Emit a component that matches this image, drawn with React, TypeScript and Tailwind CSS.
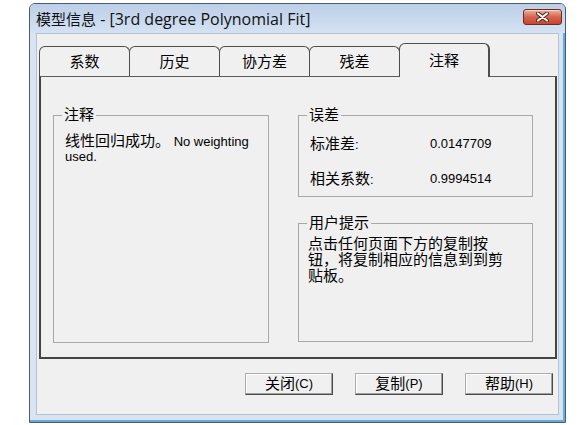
import React from 'react'

const BASE = "font-['Liberation_Sans','Noto_Sans_CJK_SC',sans-serif]"

// CJK runs are drawn a bit larger than the latin runs (9pt vs 8pt at 120dpi)
function Zh({ children }: { children: React.ReactNode }) {
  return <span className="text-[15px]">{children}</span>
}

function Tab({ label, active, first }: { label: string; active?: boolean; first?: boolean }) {
  if (active) {
    return (
      <div className="relative z-10 -ml-px -mb-px h-[34px] w-[91px] flex items-center justify-center rounded-t-[6px] border-t border-l border-r-2 border-[#4d4d4d] bg-[#f0f0f0] pt-[2px]">
        <Zh>{label}</Zh>
      </div>
    )
  }
  return (
    <div
      className={`h-[30px] w-[91px] flex items-center justify-center rounded-t-[6px] border-t border-l border-r border-[#4d4d4d] bg-[#f0f0f0] pt-[2px] ${first ? '' : '-ml-px'}`}
    >
      <Zh>{label}</Zh>
    </div>
  )
}

function Group({ title, className, children }: { title: string; className: string; children: React.ReactNode }) {
  return (
    <fieldset className={`border border-[#a8a8a8] ${className}`}>
      <legend className="ml-[8px] px-[2px] leading-[16px]">
        <Zh>{title}</Zh>
      </legend>
      {children}
    </fieldset>
  )
}

function Button({ zh, hotkey }: { zh: string; hotkey: string }) {
  return (
    <button className="w-[88px] h-[22px] flex items-center justify-center border border-[#acacac] border-r-[#4a4a4a] border-b-[#4a4a4a] bg-[#f0f0f0] shadow-[inset_-1px_-1px_0_#a0a0a0,inset_1px_1px_0_#ffffff] leading-[16px]">
      <Zh>{zh}</Zh>({hotkey})
    </button>
  )
}

export default function App() {
  const tabs = ['系数', '历史', '协方差', '残差']

  return (
    <div className={`w-[585px] h-[425px] bg-white pl-[29px] pt-[3px] text-[13px] text-black ${BASE}`}>
      <div className="w-[537px] h-[420px] flex flex-col rounded-t-[6px] border border-[#4f5b69] bg-[#d8e4f2] shadow-[inset_-2px_-2px_0_#66aae2]">
        {/* Title bar */}
        <div className="h-[29px] shrink-0 flex pl-[6px] pr-[3px] rounded-t-[5px] bg-gradient-to-b from-[#bccfe8] to-[#d4e2f2]">
          <span className="pt-[5px] text-[16px] leading-[20px] text-[#111] font-['Open_Sans','Noto_Sans_CJK_SC',sans-serif]">
            <Zh>模型信息</Zh> - [3rd degree Polynomial Fit]
          </span>
          <div className="ml-auto mt-[5px] w-[39px] h-[16px] flex items-center justify-center rounded-[3px] border border-[#6e2a1f] bg-gradient-to-b from-[#eab1a3] via-[#d4654e] to-[#c8442c] shadow-[inset_0_1px_0_#f6d3ca]">
            <svg width="13" height="10" viewBox="0 0 13 10">
              <path d="M2 1.5 L11 8.5 M11 1.5 L2 8.5" stroke="#5a1d14" strokeWidth="4" strokeLinecap="round" />
              <path d="M2 1.5 L11 8.5 M11 1.5 L2 8.5" stroke="#ffffff" strokeWidth="2.2" strokeLinecap="round" />
            </svg>
          </div>
        </div>

        {/* Client area */}
        <div className="flex-1 mx-[6px] mb-[7px] flex flex-col border border-[#b3c3d6] bg-[#f0f0f0]">
          {/* Tabs */}
          <div className="mt-[9px] ml-[2px] h-[33px] flex items-end">
            {tabs.map((t, i) => (
              <Tab key={t} label={t} first={i === 0} />
            ))}
            <Tab label="注释" active />
          </div>

          {/* Tab page */}
          <div className="ml-[2px] w-[518px] h-[283px] flex gap-[29px] pt-[30px] pl-[12px] border-t border-t-[#5c5c5c] border-l-2 border-r-2 border-b-2 border-[#444]">
            <Group title="注释" className="w-[216px] h-[236px]">
              <p className="pl-[11px] pt-[9px] pr-[6px] leading-[15px]">
                <Zh>线性回归成功。</Zh> No weighting
                <br />
                used.
              </p>
            </Group>

            <div className="w-[235px] flex flex-col gap-[18px]">
              <Group title="误差" className="h-[90px]">
                <div className="pl-[11px] pt-[12px] flex flex-col gap-[18px] leading-[16px]">
                  <div className="flex">
                    <span className="w-[120px]"><Zh>标准差</Zh>:</span>
                    <span>0.0147709</span>
                  </div>
                  <div className="flex">
                    <span className="w-[120px]"><Zh>相关系数</Zh>:</span>
                    <span>0.9994514</span>
                  </div>
                </div>
              </Group>

              <Group title="用户提示" className="h-[127px]">
                <p className="pl-[9px] pt-[4px] leading-[15px]">
                  <Zh>
                    点击任何页面下方的复制按
                    <br />
                    钮，将复制相应的信息到到剪
                    <br />
                    贴板。
                  </Zh>
                </p>
              </Group>
            </div>
          </div>

          {/* Buttons */}
          <div className="mt-[14px] flex justify-end gap-[22px] pr-[5px]">
            <Button zh="关闭" hotkey="C" />
            <Button zh="复制" hotkey="P" />
            <Button zh="帮助" hotkey="H" />
          </div>
        </div>
      </div>
    </div>
  )
}
